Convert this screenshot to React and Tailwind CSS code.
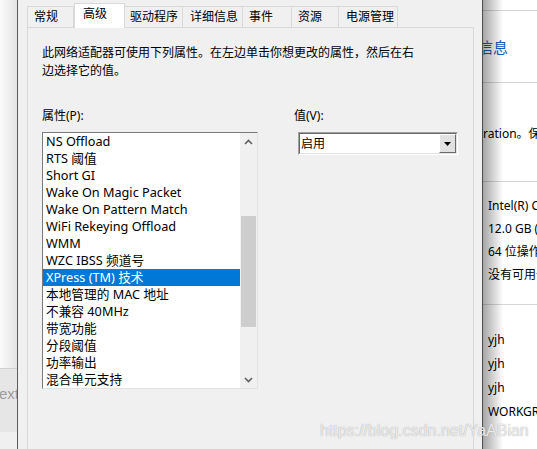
import React from 'react';

const tabs = [
  { name: '常规', w: 'w-[47px]', pl: 'pl-[6px]' },
  { name: '高级', w: 'w-[51px]', pl: 'pl-[8px]', active: true },
  { name: '驱动程序', w: 'w-[58px]', pl: 'pl-[5px]' },
  { name: '详细信息', w: 'w-[60px]', pl: 'pl-[7px]' },
  { name: '事件', w: 'w-[49px]', pl: 'pl-[6px]' },
  { name: '资源', w: 'w-[47px]', pl: 'pl-[6px]' },
  { name: '电源管理', w: 'w-[59px]', pl: 'pl-[7px]' },
];

const props = [
  'NS Offload',
  'RTS 阈值',
  'Short GI',
  'Wake On Magic Packet',
  'Wake On Pattern Match',
  'WiFi Rekeying Offload',
  'WMM',
  'WZC IBSS 频道号',
  'XPress (TM) 技术',
  '本地管理的 MAC 地址',
  '不兼容 40MHz',
  '带宽功能',
  '分段阈值',
  '功率输出',
  '混合单元支持',
];

const Chevron = ({ up }) => (
  <svg width="9" height="6" viewBox="0 0 9 6" className="block">
    <polyline
      points={up ? '1,5 4.5,1.5 8,5' : '1,1 4.5,4.5 8,1'}
      fill="none"
      stroke="#606060"
      strokeWidth="1.6"
    />
  </svg>
);

const PropertyList = () => (
  <div className="w-[216px] h-[257px] flex border-t border-l border-[#7a7a7a] border-r border-b border-r-[#e3e3e3] border-b-[#e3e3e3] bg-white">
    <div className="flex-1 flex flex-col text-[12.7px]">
      {props.map((p) => (
        <div
          key={p}
          className={`h-[17px] leading-[17px] pl-[3px] whitespace-nowrap ${
            p.startsWith('XPress') ? 'bg-[#0078d7] text-white' : 'text-black'
          }`}
        >
          {p}
        </div>
      ))}
    </div>
    {/* scrollbar */}
    <div className="w-[17px] bg-[#f0f0f0] flex flex-col items-center">
      <div className="h-[17px] flex items-center justify-center">
        <Chevron up />
      </div>
      <div className="flex-1 w-full px-[1px]">
        <div className="mt-[66px] h-[111px] bg-[#cdcdcd]" />
      </div>
      <div className="h-[17px] flex items-center justify-center">
        <Chevron />
      </div>
    </div>
  </div>
);

const ValueSelect = () => (
  <div className="ml-[4px] w-[160px] h-[23px] border border-[#a0a0a0] border-r-white border-b-white">
    <div className="h-full flex border border-[#696969] border-r-[#e3e3e3] border-b-[#e3e3e3] bg-white">
      <div className="flex-1 pl-[1px] leading-[19px]">启用</div>
      <div className="w-[17px] h-full bg-[#e1e1e1] border border-white border-r-[#696969] border-b-[#696969] flex items-center justify-center">
        <svg width="7" height="4" viewBox="0 0 7 4" className="block">
          <polygon points="0,0 7,0 3.5,4" fill="#000" />
        </svg>
      </div>
    </div>
  </div>
);

const Dialog = () => (
  <div className="w-[464px] h-full bg-[#f0f0f0] pl-[9px] pr-[8px] flex flex-col">
    {/* tab strip */}
    <div className="h-[27px] flex items-end pt-[3px]">
      {tabs.map((t) =>
        t.active ? (
          <div
            key={t.name}
            className={`${t.w} ${t.pl} h-[25px] -mb-[1px] relative z-10 bg-white border border-[#d9d9d9] border-b-0 leading-[20px]`}
          >
            {t.name}
          </div>
        ) : (
          <div
            key={t.name}
            className={`${t.w} ${t.pl} h-[21px] bg-[#f0f0f0] border border-[#d9d9d9] border-l-0 first:border-l border-b-0 leading-[20px]`}
          >
            {t.name}
          </div>
        )
      )}
    </div>

    {/* page */}
    <div className="flex-1 border border-[#d9d9d9] border-b-0 bg-[#f0f0f0] pl-[14px] pt-[16px]">
      <p className="leading-[18px] w-[376px]">
        此网络适配器可使用下列属性。在左边单击你想更改的属性，然后在右边选择它的值。
      </p>
      <div className="mt-[27px] flex">
        <div className="w-[216px]">
          <div className="leading-[18px]">属性(P):</div>
          <div className="mt-[7px]">
            <PropertyList />
          </div>
        </div>
        <div className="ml-[36px]">
          <div className="leading-[18px]">值(V):</div>
          <div className="mt-[7px]">
            <ValueSelect />
          </div>
        </div>
      </div>
    </div>
  </div>
);

const Rule = ({ mt }) => <div className={`${mt} h-px bg-[#d6d6d6]`} />;

const SystemPanel = () => (
  <div className="relative flex-1 h-full bg-white overflow-hidden">
    <Rule mt="mt-[10px]" />
    <div className="mt-[27px] -ml-[5px] text-[15px] leading-[18px] text-[#1160c0] whitespace-nowrap">信息</div>
    <Rule mt="mt-[26px]" />
    <div className="mt-[42px] leading-[18px] whitespace-nowrap">ration。保留所有权利。</div>
    <Rule mt="mt-[38px]" />
    <div className="pl-[5px] pt-[15px] flex flex-col gap-[5px] whitespace-nowrap">
      <div className="leading-[18px]">Intel(R) Core(TM) i5</div>
      <div className="leading-[18px]">12.0 GB (11.9 GB 可用)</div>
      <div className="leading-[18px]">64 位操作系统</div>
      <div className="leading-[18px]">没有可用于此显示器的笔或触控输入</div>
    </div>
    <Rule mt="mt-[20px]" />
    <div className="pl-[5px] pt-[26px] flex flex-col gap-[6px] whitespace-nowrap">
      <div className="leading-[18px]">yjh</div>
      <div className="leading-[18px]">yjh</div>
      <div className="leading-[18px]">yjh</div>
      <div className="leading-[18px]">WORKGROUP</div>
    </div>
    {/* dialog drop shadow */}
    <div className="pointer-events-none absolute inset-y-0 left-0 w-[20px] bg-gradient-to-r from-black/35 to-transparent" />
  </div>
);

const LeftStrip = () => (
  <div className="w-[17px] h-full flex flex-col overflow-hidden">
    <div className="h-[369px] bg-gradient-to-r from-[#fafafa] to-[#e4e4e4] border-b border-[#d0d0d0]" />
    <div className="h-[63px] bg-[#e6e6e6] text-[#9c9c9c] text-[15px] pt-[14px] -ml-[1px] whitespace-nowrap font-['Liberation_Sans',sans-serif]">
      ext_
    </div>
    <div className="flex-1 bg-[#f0f0f0]" />
  </div>
);

export default function App() {
  return (
    <div className="relative w-[537px] h-[449px] overflow-hidden flex text-[12px] text-black font-['Noto_Sans','Noto_Sans_CJK_SC',sans-serif]">
      <LeftStrip />
      <div className="w-px bg-[#5c5c5c]" />
      <Dialog />
      <div className="w-px bg-[#4e4e4e]" />
      <SystemPanel />
      <div className="pointer-events-none absolute left-[320px] top-[421px] text-[16px] leading-[20px] text-white/80 font-['Liberation_Sans',sans-serif] [text-shadow:0_0_1px_#8a8a8a]">
        https://blog.csdn.net/YaABian
      </div>
    </div>
  );
}
